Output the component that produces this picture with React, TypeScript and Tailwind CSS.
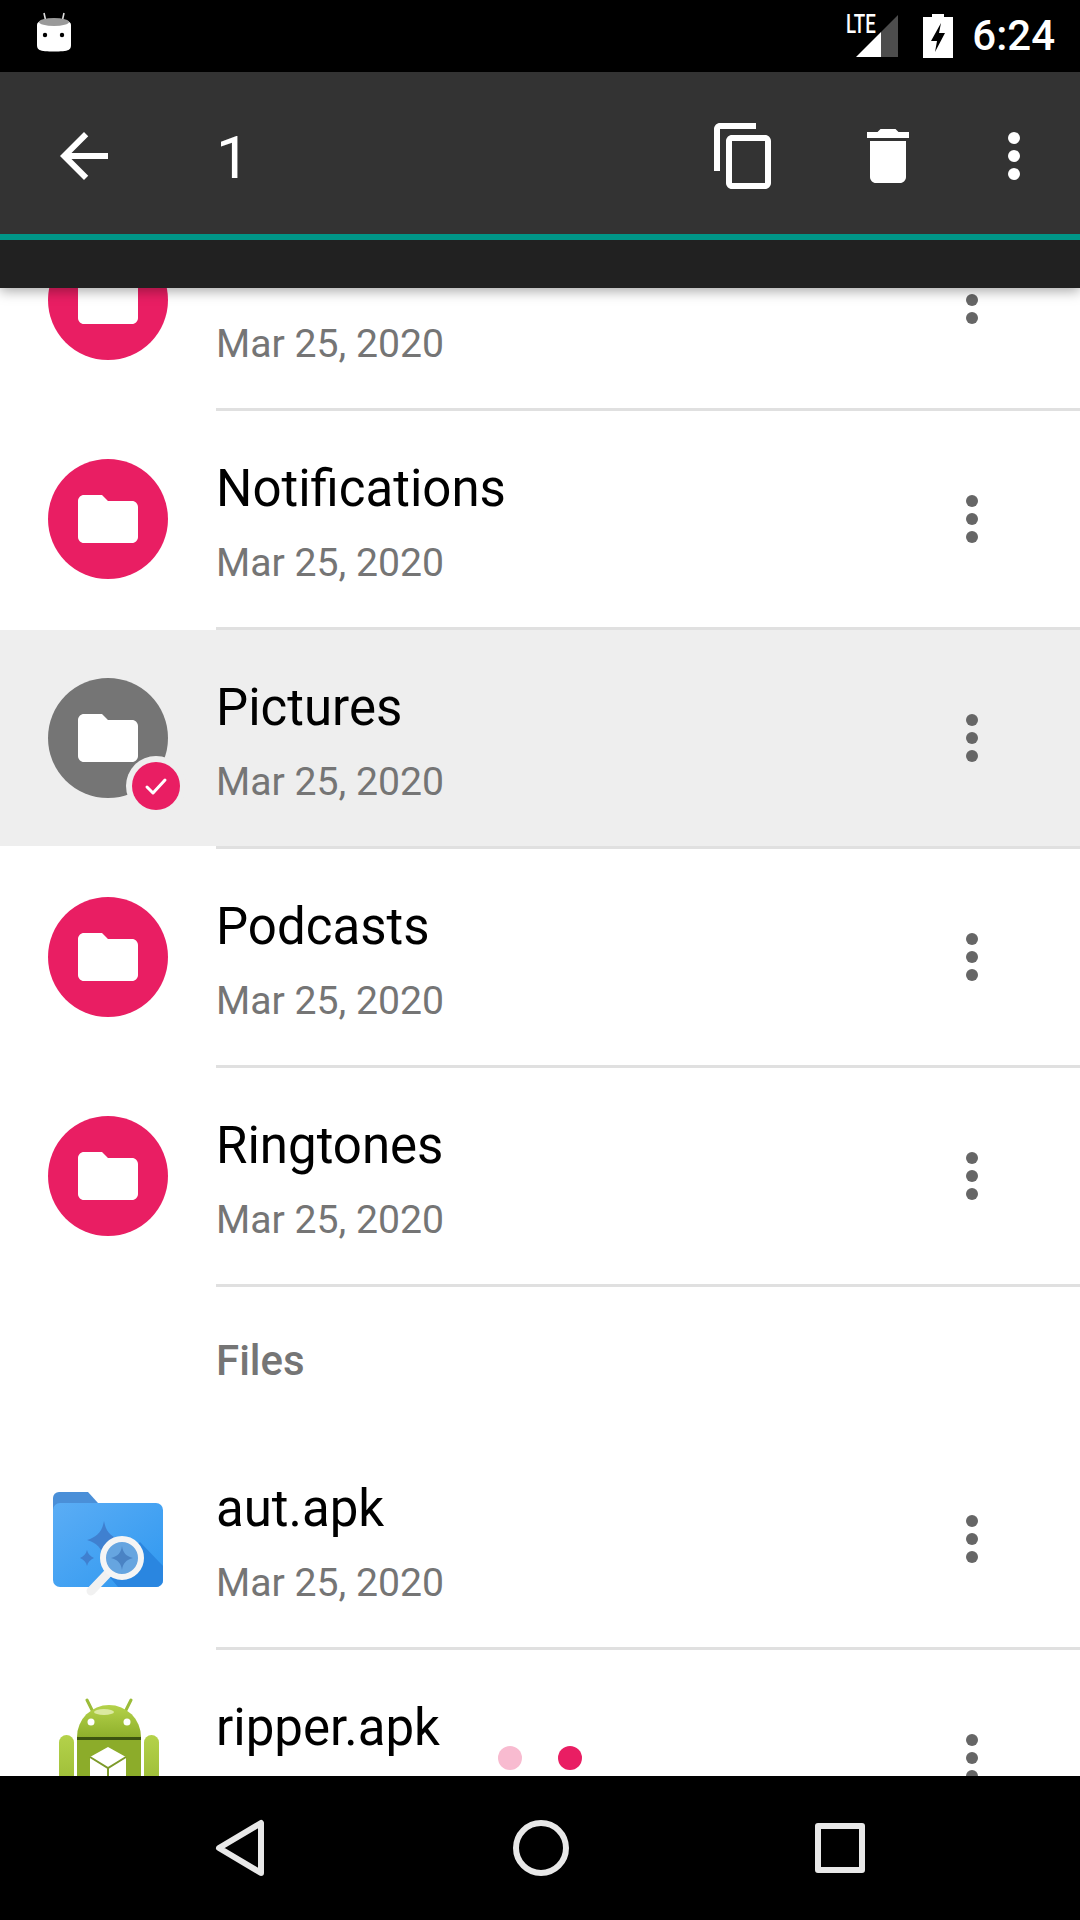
import type React from "react"

interface RowProps {
  title: string
  selected?: boolean
  icon?: React.ReactNode
}

const FolderGlyph = () => (
  <svg width="72" height="72" viewBox="0 0 24 24" fill="#fff">
    <path d="M10 4H4c-1.1 0-2 .9-2 2v12c0 1.1.9 2 2 2h16c1.1 0 2-.9 2-2V8c0-1.1-.9-2-2-2h-8l-2-2z" />
  </svg>
)

const FolderAvatar = ({ selected }: { selected?: boolean }) => (
  <div className={`relative w-[120px] h-[120px] rounded-full flex items-center justify-center ${selected ? "bg-[#757575]" : "bg-[#e91e63]"}`}>
    <FolderGlyph />
    {selected && (
      <div className="absolute left-[78px] top-[78px] w-[60px] h-[60px] rounded-full bg-[#eeeeee] flex items-center justify-center">
        <div className="w-[48px] h-[48px] rounded-full bg-[#e91e63] flex items-center justify-center">
          <svg width="24" height="24" viewBox="0 0 24 24" fill="none">
            <path d="M3 13l6 6L21 6" stroke="#fff" strokeWidth="3" strokeLinecap="round" strokeLinejoin="round" />
          </svg>
        </div>
      </div>
    )}
  </div>
)

const ApkFolderIcon = () => (
  <svg width="120" height="120" viewBox="0 0 120 120">
    <defs>
      <linearGradient id="apkFront" x1="0" y1="0" x2="1" y2="1">
        <stop offset="0" stopColor="#5badf5" />
        <stop offset="1" stopColor="#2f98f0" />
      </linearGradient>
    </defs>
    <path d="M5 40V19a6 6 0 0 1 6-6h29l10 11v16z" fill="#4a8fd8" />
    <rect x="5" y="24" width="110" height="84" rx="7" fill="url(#apkFront)" />
    <path d="M92 63L115 87v14a7 7 0 0 1-7 7H70L60 96z" fill="#2a86e0" />
    <path d="M56 42c2 11 7 16 17 19-10 3-15 8-17 19-2-11-7-16-17-19 10-3 15-8 17-19z" fill="#3f80d0" />
    <path d="M39 71c1 4 3 6 7 8-4 2-6 4-7 8-1-4-3-6-7-8 4-2 6-4 7-8z" fill="#3f80d0" />
    <path d="M62 92L43 112" stroke="#f1f1f1" strokeWidth="9" strokeLinecap="round" />
    <circle cx="74" cy="79" r="19" fill="#66a5e0" stroke="#f5f5f5" strokeWidth="6" />
    <path d="M74 67c1 7 4 10 11 12-7 2-10 5-11 12-1-7-4-10-11-12 7-2 10-5 11-12z" fill="#4a83c4" />
  </svg>
)

const AndroidIcon = () => (
  <svg width="120" height="120" viewBox="0 0 120 120">
    <defs>
      <linearGradient id="droid" x1="0" y1="0" x2="0" y2="1">
        <stop offset="0" stopColor="#b4d24a" />
        <stop offset="1" stopColor="#8fb02c" />
      </linearGradient>
    </defs>
    <path d="M39 2l6 12M83 2l-6 12" stroke="#9bbc38" strokeWidth="3" strokeLinecap="round" />
    <path d="M29 39a32 32 0 0 1 64 0z" fill="url(#droid)" />
    <ellipse cx="56" cy="14" rx="10" ry="3" fill="#dbe9a0" />
    <circle cx="43" cy="24" r="3.500" fill="#fff" />
    <circle cx="79" cy="24" r="3.500" fill="#fff" />
    <rect x="29" y="39" width="64" height="3" fill="#3d5410" />
    <rect x="29" y="42" width="64" height="90" fill="#8cac2a" />
    <rect x="11" y="37" width="15" height="80" rx="7.500" fill="url(#droid)" />
    <rect x="96" y="37" width="15" height="80" rx="7.500" fill="url(#droid)" />
    <path d="M42 59l18-10 18 10v44H42z" fill="#fff" />
    <path d="M42 59l18 11 18-11M60 70v33" stroke="#7d9a2a" strokeWidth="2" fill="none" />
  </svg>
)

const Kebab = ({ tone }: { tone: string }) => (
  <div className="flex flex-col gap-[6px]">
    <span className={`block w-[12px] h-[12px] rounded-full ${tone}`} />
    <span className={`block w-[12px] h-[12px] rounded-full ${tone}`} />
    <span className={`block w-[12px] h-[12px] rounded-full ${tone}`} />
  </div>
)

const Row: React.FC<RowProps> = ({ title, selected, icon }) => (
  <div>
    <div className={`h-[216px] flex items-center pl-[48px] pr-[102px] ${selected ? "bg-[#eeeeee]" : "bg-white"}`}>
      {icon ?? <FolderAvatar selected={selected} />}
      <div className="ml-[48px] flex-1 min-w-0">
        <div className="text-[51px] leading-[64px] text-black mt-[5px]">{title}</div>
        <div className="text-[39.2px] leading-[48px] text-[#757575] mt-[18px]">Mar 25, 2020</div>
      </div>
      <Kebab tone="bg-[#666666]" />
    </div>
    <div className="h-[3px] ml-[216px] bg-[#e0e0e0]" />
  </div>
)

const StatusBar = () => (
  <div className="h-[72px] bg-black flex items-center pl-[36px] pr-[25px] shrink-0">
    <svg width="36" height="42" viewBox="0 0 36 42" className="-mt-[6px]">
      <path d="M8 1l2 9M28 1l-2 9" stroke="#ddd" strokeWidth="1.6" />
      <path d="M1 13c0-4 6-6 17-6s17 2 17 6v20c0 2-.5 4-2.5 5-4 2-25 2-29 0C1.500 37 1 35 1 33z" fill="#fff" />
      <ellipse cx="18" cy="10" rx="15" ry="4" fill="#9a9a9a" />
      <circle cx="9" cy="23" r="2.200" fill="#000" />
      <circle cx="26" cy="23" r="2.200" fill="#000" />
    </svg>
    <div className="ml-auto flex items-center">
      <div className="relative w-[54px] h-[44px]">
        <svg width="44" height="44" viewBox="0 0 44 44" className="absolute left-[10px] top-[1px]">
          <path d="M0 42L25 17v25z" fill="#fff" />
          <path d="M25 17L42 0v42H25z" fill="#4d4d4d" />
        </svg>
        <span className="absolute left-0 -top-[5px] text-[26px] leading-[30px] font-medium text-white origin-left scale-x-[0.72]">LTE</span>
      </div>
      <svg width="30" height="44" viewBox="0 0 30 44" className="ml-[23px]">
        <path fillRule="evenodd" d="M9 0h12v3h9v41H0V3h9zM18 9l-10 18h6l-2 11 10-19h-6z" fill="#fff" />
      </svg>
      <span className="ml-[19px] text-[42px] leading-[72px] font-medium text-white">6:24</span>
    </div>
  </div>
)

const ActionBar = () => (
  <div className="shrink-0 relative z-10 shadow-[0_3px_12px_rgba(0,0,0,0.35)]">
    <div className="h-[162px] bg-[#333333] flex items-center pt-[6px] pl-[48px] pr-[60px]">
      <svg width="72" height="72" viewBox="0 0 24 24" fill="#fff">
        <path d="M20 11H7.830l5.590-5.590L12 4l-8 8 8 8 1.410-1.410L7.830 13H20v-2z" />
      </svg>
      <span className="ml-[96px] mt-[4px] text-[60px] leading-[72px] text-white">1</span>
      <svg width="72" height="72" viewBox="0 0 24 24" fill="#fff" className="ml-auto">
        <path d="M16 1H4c-1.100 0-2 .9-2 2v14h2V3h12V1zm3 4H8c-1.100 0-2 .9-2 2v14c0 1.100.9 2 2 2h11c1.100 0 2-.9 2-2V7c0-1.100-.9-2-2-2zm0 16H8V7h11v14z" />
      </svg>
      <svg width="72" height="72" viewBox="0 0 24 24" fill="#fff" className="ml-[72px]">
        <path d="M6 19c0 1.100.9 2 2 2h8c1.100 0 2-.9 2-2V7H6v12zM19 4h-3.500l-1-1h-5l-1 1H5v2h14V4z" />
      </svg>
      <div className="ml-[84px]">
        <Kebab tone="bg-white" />
      </div>
    </div>
    <div className="h-[6px] bg-[#009688]" />
    <div className="h-[48px] bg-[#212121]" />
  </div>
)

const NavBar = () => (
  <div className="h-[144px] bg-black shrink-0 relative z-10 flex items-center justify-between pl-[213px] pr-[215px]">
    <svg width="54" height="62" viewBox="0 0 54 62" fill="none">
      <path d="M48 6v50L6 31z" stroke="#e8e8e8" strokeWidth="6" strokeLinejoin="round" />
    </svg>
    <div className="w-[56px] h-[56px] rounded-full border-[6px] border-[#e8e8e8]" />
    <div className="w-[50px] h-[50px] rounded-[3px] border-[6px] border-[#e8e8e8]" />
  </div>
)

export default function App() {
  return (
    <div className="w-[1080px] h-[1920px] flex flex-col overflow-hidden bg-white font-['Roboto',sans-serif]">
      <StatusBar />
      <ActionBar />
      <div className="relative flex-1 min-h-0 overflow-hidden">
        <div className="-mt-[96px]">
          <Row title="Music" />
          <Row title="Notifications" />
          <Row title="Pictures" selected />
          <Row title="Podcasts" />
          <Row title="Ringtones" />
          <div className="h-[144px] pl-[216px] pt-[3px] flex items-center text-[42px] font-medium text-[#757575]">Files</div>
          <Row title="aut.apk" icon={<ApkFolderIcon />} />
          <Row title="ripper.apk" icon={<AndroidIcon />} />
        </div>
        <div className="absolute left-[498px] bottom-[6px] flex gap-[36px]">
          <span className="block w-[24px] h-[24px] rounded-full bg-[#f8bbd0]" />
          <span className="block w-[24px] h-[24px] rounded-full bg-[#e91e63]" />
        </div>
      </div>
      <NavBar />
    </div>
  )
}
